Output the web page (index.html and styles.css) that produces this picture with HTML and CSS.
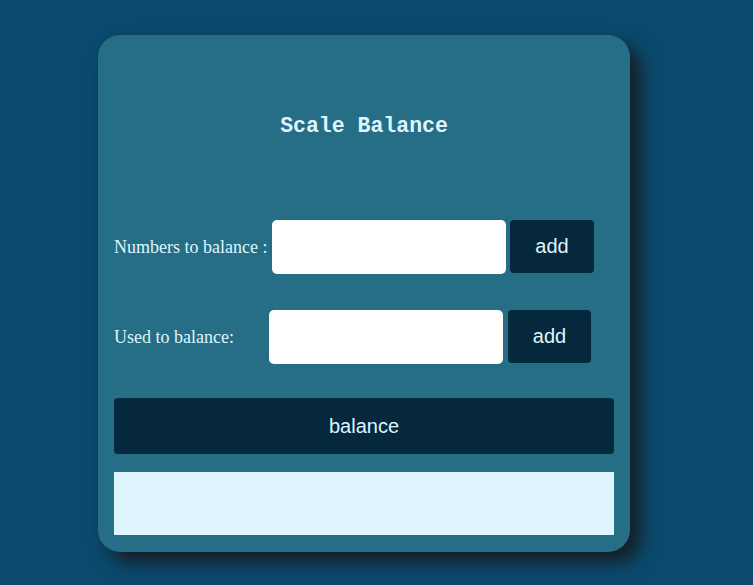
FILE: index.html
```html
<!DOCTYPE html>
<html>
<head>
<meta charset="utf-8">
<link rel="stylesheet" href="styles.css">
</head>
<body>
<div class="card">
  <h1 class="title">Scale Balance</h1>
  <div class="row row-one">
    <label class="label label-one">Numbers to balance :</label>
    <input class="field" type="text">
    <button class="btn add add-one">add</button>
  </div>
  <div class="row row-two">
    <label class="label label-two">Used to balance:</label>
    <input class="field" type="text">
    <button class="btn add add-two">add</button>
  </div>
  <button class="btn balance">balance</button>
  <div class="result"></div>
</div>
</body>
</html>
```
FILE: styles.css
```css
html, body {
  margin: 0;
  padding: 0;
  background: #0b4a6e;
  height: 100%;
}
body {
  padding: 35px 0 0 98px;
  box-sizing: border-box;
}
.card {
  width: 532px;
  height: 517px;
  box-sizing: border-box;
  background: #266e85;
  border-radius: 22px;
  box-shadow: 10px 10px 18px rgba(22, 26, 30, 0.95);
  padding: 0 16px;
  display: flex;
  flex-direction: column;
}
.title {
  margin: 79px 0 0 0;
  height: 24px;
  line-height: 24px;
  font-family: "Liberation Mono", monospace;
  font-weight: bold;
  font-size: 21.5px;
  color: #dff5fd;
  text-align: center;
}
.row {
  display: flex;
  align-items: center;
  height: 54px;
}
.row-one { margin-top: 82px; }
.row-two { margin-top: 36px; }
.label {
  font-family: "Liberation Serif", serif;
  font-size: 18px;
  color: #dff5fd;
}
.label-one { width: 158px; }
.label-two { width: 155px; }
.field {
  width: 234px;
  height: 54px;
  box-sizing: border-box;
  border: none;
  border-radius: 5px;
  background: #ffffff;
  margin: 0;
  padding: 0;
}
.btn {
  border: none;
  background: #05283c;
  color: #dff5fd;
  font-family: "Liberation Sans", sans-serif;
  font-size: 20px;
  border-radius: 4px;
  padding: 0;
}
.add {
  height: 53px;
  align-self: flex-start;
}
.add-one { width: 84px; margin-left: 4px; }
.add-two { width: 83px; margin-left: 5px; }
.balance {
  margin-top: 34px;
  height: 56px;
  width: 100%;
}
.result {
  margin-top: 18px;
  height: 63px;
  background: #dff5fd;
}
```
